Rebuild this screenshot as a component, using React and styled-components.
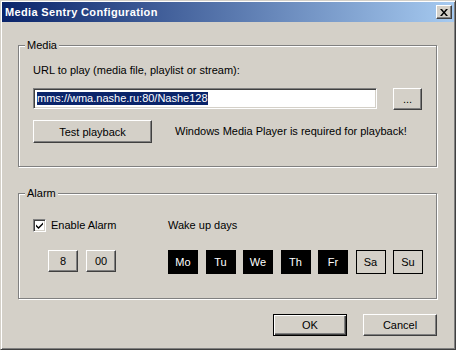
import React from 'react';
import styled, { createGlobalStyle } from 'styled-components';

const GlobalStyle = createGlobalStyle`
  html, body {
    margin: 0;
    background: #d4d0c8;
    font-family: "Liberation Sans", Arial, sans-serif;
    font-size: 11px;
    color: #000;
  }
`;

const Window = styled.div`
  width: 456px;
  height: 350px;
  box-sizing: border-box;
  display: flex;
  flex-direction: column;
  padding: 1px;
  background: #d4d0c8;
  border: 1px solid;
  border-color: #d4d0c8 #404040 #404040 #d4d0c8;
  box-shadow: inset 1px 1px 0 #fff, inset -1px -1px 0 #808080;
`;

const TitleBar = styled.div`
  height: 20px;
  display: flex;
  align-items: center;
  justify-content: space-between;
  padding: 0 2px 0 3px;
  background: linear-gradient(to right, #0a246a, #a6caf0);
  color: #fff;
  font-weight: bold;
  letter-spacing: 0.35px;
`;

const CloseButton = styled.div`
  width: 16px;
  height: 14px;
  box-sizing: border-box;
  display: flex;
  align-items: center;
  justify-content: center;
  background: #d4d0c8;
  border: 1px solid;
  border-color: #fff #404040 #404040 #fff;
  box-shadow: inset -1px -1px 0 #808080;
`;

const Body = styled.div`
  flex: 1;
  display: flex;
  flex-direction: column;
  padding: 0 17px 0 16px;
`;

const Group = styled.fieldset`
  margin: ${p => p.$top || 0}px 0 0;
  padding: ${p => p.$pad};
  border: 1px solid #808080;
  box-shadow: 1px 1px 0 #fff, inset 1px 1px 0 #fff;
  min-width: 0;
`;

const Legend = styled.legend`
  margin-left: -8px;
  padding: 0 2px;
  line-height: 13px;
  background: #d4d0c8;
`;

const Label = styled.div`
  line-height: 13px;
  white-space: nowrap;
`;

const UrlRow = styled.div`
  display: flex;
  align-items: flex-start;
  gap: 16px;
  margin-top: 11px;
`;

const UrlField = styled.div`
  flex: 1;
  height: 21px;
  box-sizing: border-box;
  display: flex;
  align-items: center;
  padding-left: 3px;
  background: #fff;
  border: 1px solid;
  border-color: #808080 #fff #fff #808080;
  box-shadow: inset 1px 1px 0 #404040, inset -1px -1px 0 #d4d0c8;
`;

const Selected = styled.span`
  background: #0a246a;
  color: #fff;
  line-height: 13px;
`;

const Button = styled.div`
  width: ${p => p.$w}px;
  height: ${p => p.$h || 22}px;
  box-sizing: border-box;
  display: flex;
  align-items: center;
  justify-content: center;
  background: #d4d0c8;
  border: 1px solid;
  border-color: ${p => (p.$default ? '#000' : '#fff #404040 #404040 #fff')};
  box-shadow: ${p =>
    p.$default
      ? 'inset 1px 1px 0 #fff, inset -1px -1px 0 #404040, inset -2px -2px 0 #808080'
      : 'inset -1px -1px 0 #808080'};
  white-space: nowrap;
`;

const TestRow = styled.div`
  display: flex;
  align-items: center;
  gap: 23px;
  margin-top: 10px;
`;

const AlarmGrid = styled.div`
  display: grid;
  grid-template-columns: 135px auto;
  row-gap: 18px;
  align-items: start;
`;

const CheckRow = styled.div`
  display: flex;
  align-items: center;
  gap: 5px;
  line-height: 13px;
`;

const CheckBox = styled.div`
  width: 13px;
  height: 13px;
  box-sizing: border-box;
  display: flex;
  align-items: center;
  justify-content: center;
  background: #fff;
  border: 1px solid;
  border-color: #808080 #fff #fff #808080;
  box-shadow: inset 1px 1px 0 #404040, inset -1px -1px 0 #d4d0c8;
`;

const HourGroup = styled.div`
  display: flex;
  gap: 8px;
  padding-left: 15px;
`;

const Days = styled.div`
  display: flex;
  gap: 7.5px;
`;

const Day = styled.div`
  width: 30px;
  height: 24px;
  box-sizing: border-box;
  display: flex;
  align-items: center;
  justify-content: center;
  border: 1px solid #000;
  background: ${p => (p.$on ? '#000' : 'transparent')};
  color: ${p => (p.$on ? '#fff' : '#000')};
`;

const Footer = styled.div`
  display: flex;
  justify-content: flex-end;
  gap: 16px;
  margin-top: 15px;
`;

const days = [
  { name: 'Mo', on: true },
  { name: 'Tu', on: true },
  { name: 'We', on: true },
  { name: 'Th', on: true },
  { name: 'Fr', on: true },
  { name: 'Sa', on: false },
  { name: 'Su', on: false },
];

export default function App() {
  return (
    <>
      <GlobalStyle />
      <Window>
        <TitleBar>
          <span>Media Sentry Configuration</span>
          <CloseButton>
            <svg width="8" height="7" viewBox="0 0 8 7">
              <path d="M0 0h2l2 2.5L6 0h2L5 3.5 8 7H6L4 4.5 2 7H0l3-3.5z" fill="#000" />
            </svg>
          </CloseButton>
        </TitleBar>
        <Body>
          <Group $top={17} $pad="12px 14px 23px">
            <Legend>Media</Legend>
            <Label>URL to play (media file, playlist or stream):</Label>
            <UrlRow>
              <UrlField>
                <Selected>mms://wma.nashe.ru:80/Nashe128</Selected>
              </UrlField>
              <Button $w={29}>...</Button>
            </UrlRow>
            <TestRow>
              <Button $w={119} $h={23}>Test playback</Button>
              <Label>Windows Media Player is required for playback!</Label>
            </TestRow>
          </Group>
          <Group $top={20} $pad="19px 14px 24px">
            <Legend>Alarm</Legend>
            <AlarmGrid>
              <CheckRow>
                <CheckBox>
                  <svg width="7" height="7" viewBox="0 0 7 7">
                    <path d="M0 2.5l2.5 2.5L7 0.5v2L2.5 7 0 4.5z" fill="#000" />
                  </svg>
                </CheckBox>
                Enable Alarm
              </CheckRow>
              <Label>Wake up days</Label>
              <HourGroup>
                <Button $w={30}>8</Button>
                <Button $w={30}>00</Button>
              </HourGroup>
              <Days>
                {days.map(d => (
                  <Day key={d.name} $on={d.on}>{d.name}</Day>
                ))}
              </Days>
            </AlarmGrid>
          </Group>
          <Footer>
            <Button $w={74} $default>OK</Button>
            <Button $w={74}>Cancel</Button>
          </Footer>
        </Body>
      </Window>
    </>
  );
}
